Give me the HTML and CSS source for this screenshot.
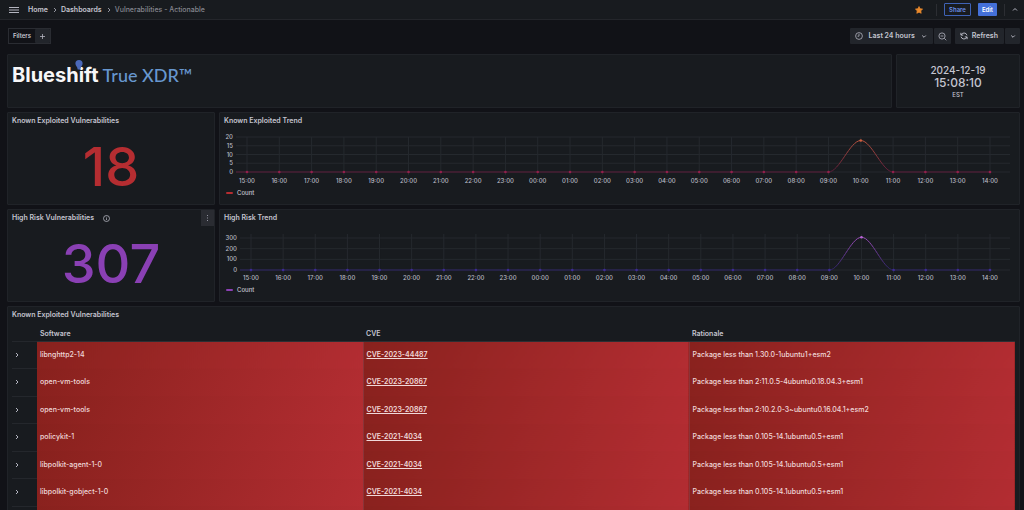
FILE: index.html
```html
<!DOCTYPE html>
<html lang="en">
<head>
<meta charset="utf-8">
<title>Vulnerabilities - Actionable</title>
<link rel="stylesheet" href="styles.css">
</head>
<body>
<header class="topbar">
  <button class="icon-btn menu-btn" aria-label="Open menu">
    <svg width="10" height="8" viewBox="0 0 10 8"><path d="M0 1.500h10M0 4h10M0 6.500h10" class="stroke"/></svg>
  </button>
  <nav class="crumbs" aria-label="Breadcrumb">
    <a href="#">Home</a>
    <svg width="4" height="6" viewBox="0 0 4 6"><path d="M1 1l2 2-2 2" class="stroke thin"/></svg>
    <a href="#">Dashboards</a>
    <svg width="4" height="6" viewBox="0 0 4 6"><path d="M1 1l2 2-2 2" class="stroke thin"/></svg>
    <span class="current">Vulnerabilities - Actionable</span>
  </nav>
  <div class="actions">
    <button class="icon-btn star" aria-label="Unmark as favorite">
      <svg width="8" height="8" viewBox="0 0 8 8"><path d="M4 .5l1.100 2.200 2.500.4-1.800 1.700.4 2.500L4 6.200l-2.200 1.100.4-2.500L.4 3.100l2.500-.4z" fill="#eb8a2c" stroke="#eb8a2c" stroke-width=".7" stroke-linejoin="round"/></svg>
    </button>
    <span class="divider"></span>
    <button class="btn btn-outline">Share</button>
    <button class="btn btn-primary">Edit</button>
    <span class="divider"></span>
    <button class="icon-btn" aria-label="Collapse toolbar">
      <svg width="6" height="5" viewBox="0 0 6 5"><path d="M1 3.500l2-2 2 2" class="stroke"/></svg>
    </button>
  </div>
</header>

<main class="dashboard">
  <div class="toolbar">
    <div class="group filters">
      <span class="filters-label">Filters</span>
      <button class="seg" aria-label="Add filter">
        <svg width="7" height="7" viewBox="0 0 7 7"><path d="M3.500 1v5M1 3.500h5" class="stroke thin"/></svg>
      </button>
    </div>
    <div class="controls">
      <div class="group">
        <button class="seg seg-time">
          <svg width="8" height="8" viewBox="0 0 8 8"><circle cx="4" cy="4" r="3.400" class="stroke thin"/><path d="M4 1.800v2.400H2.500" class="stroke thin"/></svg>
          Last 24 hours
          <svg width="6" height="5" viewBox="0 0 6 5"><path d="M1.200 1.500L3 3.300l1.800-1.800" class="stroke"/></svg>
        </button>
        <button class="seg" aria-label="Zoom out time range">
          <svg width="9" height="9" viewBox="0 0 9 9"><circle cx="4" cy="4" r="3.100" class="stroke thin"/><path d="M2.600 4h2.800M6.300 6.300l2 2" class="stroke thin"/></svg>
        </button>
      </div>
      <div class="group">
        <button class="seg seg-refresh">
          <svg width="8" height="8" viewBox="0 0 8 8"><path d="M1.100 3A3.100 3.100 0 0 1 7 3.300M.9 .8v2.300h2.300M6.900 5A3.100 3.100 0 0 1 1 4.700M7.100 7.200V4.900H4.800" class="stroke"/></svg>
          Refresh
        </button>
        <button class="seg" aria-label="Auto refresh interval">
          <svg width="6" height="5" viewBox="0 0 6 5"><path d="M1.200 1.500L3 3.300l1.800-1.800" class="stroke"/></svg>
        </button>
      </div>
    </div>
  </div>

  <div class="row row-banner">
    <section class="panel banner">
      <span class="brand">Blueshift<svg class="pin" width="8" height="10" viewBox="0 0 8 10"><path d="M4 0a3.600 3.600 0 0 1 3.600 3.600C7.600 6 5.600 6.600 5.300 9.400H2.700C2.400 6.600.4 6 .4 3.600A3.600 3.600 0 0 1 4 0z" fill="#4b68b8"/></svg></span>
      <span class="product">True XDR™</span>
    </section>
    <section class="panel clock">
      <div class="clock-date">2024-12-19</div>
      <time class="clock-time">15:08:10</time>
      <div class="clock-zone">EST</div>
    </section>
  </div>

  <div class="row row-stat">
    <section class="panel">
      <h2 class="title">Known Exploited Vulnerabilities</h2>
      <div class="stat stat-red">18</div>
    </section>
    <section class="panel">
      <h2 class="title">Known Exploited Trend</h2>
      <svg class="chart" id="exploited-trend" role="img" aria-label="Known Exploited Trend"></svg>
      <div class="legend"><span class="swatch swatch-red"></span>Count</div>
    </section>
  </div>

  <div class="row row-stat">
    <section class="panel">
      <h2 class="title">High Risk Vulnerabilities
        <svg width="7" height="7" viewBox="0 0 7 7"><circle cx="3.500" cy="3.500" r="3" class="stroke thin"/><path d="M3.500 3.200v1.900M3.500 1.800v.7" class="stroke thin"/></svg>
      </h2>
      <button class="panel-menu" aria-label="Panel menu">
        <svg width="3" height="8" viewBox="0 0 3 8"><path d="M1 1h1v1H1zM1 3.500h1v1H1zM1 6h1v1H1z" fill="#9293a0"/></svg>
      </button>
      <div class="stat stat-purple">307</div>
    </section>
    <section class="panel">
      <h2 class="title">High Risk Trend</h2>
      <svg class="chart" id="risk-trend" role="img" aria-label="High Risk Trend"></svg>
      <div class="legend"><span class="swatch swatch-purple"></span>Count</div>
    </section>
  </div>

  <section class="panel panel-table">
    <h2 class="title">Known Exploited Vulnerabilities</h2>
    <table class="vulns">
      <thead>
        <tr><th class="expand"></th><th>Software</th><th>CVE</th><th>Rationale</th></tr>
      </thead>
      <tbody id="vuln-rows"></tbody>
    </table>
  </section>
</main>
<script src="dashboard.js"></script>
</body>
</html>
```
FILE: styles.css
```css
* {
  box-sizing: border-box;
}

body {
  margin: 0;
  height: 100vh;
  overflow: hidden;
  display: flex;
  flex-direction: column;
  background: #111217;
  color: #c4c5d0;
  font: 500 7px/10px Inter, "Liberation Sans", sans-serif;
}

button {
  margin: 0;
  padding: 0;
  border: 0;
  background: none;
  color: inherit;
  font: inherit;
  display: flex;
  align-items: center;
  justify-content: center;
}

a {
  color: inherit;
  text-decoration: none;
}

svg {
  display: block;
  flex: none;
}

.stroke {
  fill: none;
  stroke: #b4b5c0;
  stroke-width: 1;
}

.thin {
  stroke-width: 0.8;
}

.topbar {
  flex: none;
  display: flex;
  align-items: center;
  height: 20px;
  padding: 0 6px 0 8px;
  background: #181b1f;
  border-bottom: 1px solid #24262b;
}

.menu-btn {
  width: 11px;
}

.crumbs {
  display: flex;
  align-items: center;
  gap: 4px;
  margin-left: 9px;
  font-weight: 600;
}

.crumbs svg {
  margin: 0 0 0 1px;
}

.current {
  color: #85868f;
  font-weight: 500;
}

.actions {
  display: flex;
  align-items: center;
  gap: 7px;
  margin-left: auto;
}

.star {
  margin-right: 6px;
}

.divider {
  width: 1px;
  height: 12px;
  background: #2c2e33;
}

.btn {
  height: 13px;
  padding: 0 4px;
  border-radius: 1px;
  font-size: 6px;
  font-weight: 600;
}

.btn-outline {
  border: 1px solid #3f62b5;
  color: #6a8fe8;
}

.btn-primary {
  background: #4470d8;
  color: #ffffff;
}

.dashboard {
  flex: 1;
  min-height: 0;
  overflow: hidden;
  display: flex;
  flex-direction: column;
  gap: 4px;
  padding: 8px 4px 0 7px;
}

.toolbar {
  flex: none;
  display: flex;
  justify-content: space-between;
  height: 22px;
}

.controls {
  display: flex;
  gap: 4px;
}

.group {
  display: flex;
  height: 16px;
  gap: 1px;
}

.seg {
  gap: 4px;
  min-width: 15px;
  padding: 0 4px;
  background: #22252b;
  border-radius: 1px;
  font-weight: 600;
}

.seg-time {
  gap: 6px;
  padding: 0 6px 0 5px;
}

.seg-refresh {
  padding: 0 6px 0 5px;
}

.filters {
  gap: 0;
  border: 1px solid #2a2c32;
  margin-left: 1px;
}

.filters-label {
  padding: 2px 4px;
  font-size: 6px;
  font-weight: 600;
}

.row {
  flex: none;
  display: grid;
  gap: 4px;
}

.row-banner {
  grid-template-columns: 885fr 124fr;
  min-height: 54px;
}

.row-stat {
  grid-template-columns: 208fr 801fr;
  min-height: 93px;
}

.panel {
  position: relative;
  min-width: 0;
  display: flex;
  flex-direction: column;
  background: #181b1f;
  border: 1px solid #202328;
  border-radius: 1px;
}

.title {
  display: flex;
  align-items: center;
  gap: 9px;
  height: 16px;
  margin: 0;
  padding: 0 4px;
  font-size: 7px;
  font-weight: 600;
}

.banner {
  flex-direction: row;
  align-items: baseline;
  gap: 4px;
  padding: 8px 4px;
}

.brand {
  position: relative;
  color: #f7f7f8;
  font-size: 20px;
  line-height: 24px;
  font-weight: 700;
}

.pin {
  position: absolute;
  top: -3px;
  right: 16px;
}

.product {
  color: #6797cf;
  font-family: Lato, sans-serif;
  font-size: 18px;
  line-height: 24px;
}

.clock {
  align-items: center;
  justify-content: center;
}

.clock-date {
  font-size: 10px;
  line-height: 12px;
}

.clock-time {
  font-size: 12px;
  line-height: 14px;
}

.clock-zone {
  font-size: 6px;
  line-height: 9px;
}

.stat {
  flex: 1;
  display: flex;
  align-items: center;
  justify-content: center;
  font-size: 54px;
  line-height: 60px;
  font-weight: 500;
}

.stat-red {
  color: #b52d31;
}

.stat-purple {
  color: #8a40b4;
}

.panel-menu {
  position: absolute;
  top: 0;
  right: 0;
  width: 13px;
  height: 16px;
  background: #2a2c32;
}

.chart {
  width: 100%;
  height: 58px;
}

.chart text {
  fill: #b9bac4;
  font-size: 6px;
}

.grid-line {
  stroke: #25292e;
  stroke-width: 1;
}

.series {
  fill: none;
  stroke-width: 1;
}

.legend {
  display: flex;
  align-items: center;
  gap: 4px;
  padding: 1px 6px;
  font-size: 6px;
}

.swatch {
  width: 7px;
  height: 2px;
  border-radius: 1px;
}

.swatch-red {
  background: #b52d31;
}

.swatch-purple {
  background: #8a40b4;
}

.panel-table {
  flex: none;
  padding: 0 4px;
}

.panel-table .title {
  padding: 0;
}

.vulns {
  width: 100%;
  height: 211px;
  table-layout: fixed;
  border-collapse: collapse;
}

.vulns th {
  height: 18px;
  padding: 4px 3px 0;
  text-align: left;
  font-weight: 600;
  border-bottom: 1px solid #2c2e33;
}

.vulns .expand {
  width: 25px;
  padding: 0 3px;
  background: none;
  border-bottom: 1px solid #24272c;
}

.vulns td {
  height: 27px;
  padding: 0 3px;
  color: #f0d9da;
  background: linear-gradient(120deg, #88211d, #b32d32);
}

.vulns td + td + td {
  border-left: 1px solid #8a3438;
}

.vulns td a {
  font-weight: 600;
  text-decoration: underline;
}
```
FILE: dashboard.js
```javascript
const SVG_NS = "http://www.w3.org/2000/svg";

function add(parent, tag, attrs, text) {
  const node = document.createElementNS(SVG_NS, tag);
  for (const key in attrs) node.setAttribute(key, attrs[key]);
  if (text !== undefined) node.textContent = text;
  parent.appendChild(node);
  return node;
}

// Hourly series from 15:00 to 14:00; only the 10:00 bucket has a value.
function drawChart(id, cfg) {
  const svg = document.getElementById(id);
  svg.replaceChildren();
  const width = svg.getBoundingClientRect().width;
  const right = width - 9;
  const step = (width - 29 - cfg.first) / 23;
  const y = v => cfg.base - (v / cfg.max) * (cfg.base - cfg.top);

  for (const tick of cfg.ticks) {
    add(svg, "line", { x1: cfg.left, x2: right, y1: y(tick), y2: y(tick), class: "grid-line" });
    add(svg, "text", { x: cfg.left - 3, y: y(tick) + 2, "text-anchor": "end" }, tick);
  }
  for (let i = 0; i < 24; i++) {
    const x = cfg.first + i * step;
    add(svg, "line", { x1: x, x2: x, y1: 8, y2: cfg.base + 3, class: "grid-line" });
    const hour = String((15 + i) % 24).padStart(2, "0");
    add(svg, "text", { x: x, y: 54, "text-anchor": "middle" }, hour + ":00");
  }

  const gradient = add(add(svg, "defs", {}), "linearGradient", {
    id: id + "-fade", gradientUnits: "userSpaceOnUse", x1: 0, x2: 0, y1: cfg.base, y2: y(cfg.peak)
  });
  add(gradient, "stop", { offset: 0, "stop-color": cfg.low });
  add(gradient, "stop", { offset: 1, "stop-color": cfg.high });

  const x9 = cfg.first + 18 * step, x10 = x9 + step, x11 = x10 + step, h = step / 3;
  const top = y(cfg.peak), base = cfg.base;
  add(svg, "path", {
    d: `M${cfg.left} ${base}H${x9}C${x9 + h} ${base} ${x10 - h} ${top} ${x10} ${top}` +
       `C${x10 + h} ${top} ${x11 - h} ${base} ${x11} ${base}H${cfg.first + 23 * step}`,
    class: "series", stroke: `url(#${id}-fade)`
  });
  for (let i = 0; i < 24; i++) {
    const isPeak = i === 19;
    add(svg, "circle", {
      cx: cfg.first + i * step, cy: isPeak ? top : base, r: 1.3,
      fill: isPeak ? cfg.peakDot : cfg.dot
    });
  }
}

function drawCharts() {
  drawChart("exploited-trend", {
    left: 16, first: 27, top: 8, base: 43, max: 20, peak: 18, ticks: [0, 5, 10, 15, 20],
    low: "#5a1a38", high: "#b5523f", dot: "#92204b", peakDot: "#d0603f"
  });
  drawChart("risk-trend", {
    left: 20, first: 31, top: 12, base: 44, max: 300, peak: 307, ticks: [0, 100, 200, 300],
    low: "#2c2364", high: "#9a4cb8", dot: "#3d2b96", peakDot: "#b964d4"
  });
}

const vulnerabilities = [
  ["libnghttp2-14", "CVE-2023-44487", "Package less than 1.30.0-1ubuntu1+esm2"],
  ["open-vm-tools", "CVE-2023-20867", "Package less than 2:11.0.5-4ubuntu0.18.04.3+esm1"],
  ["open-vm-tools", "CVE-2023-20867", "Package less than 2:10.2.0-3~ubuntu0.16.04.1+esm2"],
  ["policykit-1", "CVE-2021-4034", "Package less than 0.105-14.1ubuntu0.5+esm1"],
  ["libpolkit-agent-1-0", "CVE-2021-4034", "Package less than 0.105-14.1ubuntu0.5+esm1"],
  ["libpolkit-gobject-1-0", "CVE-2021-4034", "Package less than 0.105-14.1ubuntu0.5+esm1"],
  ["", "", ""]
];

document.getElementById("vuln-rows").innerHTML = vulnerabilities.map(([software, cve, why]) => `
  <tr>
    <td class="expand">${software ? `<button aria-label="Expand row"><svg width="4" height="6" viewBox="0 0 4 6"><path d="M1 1l2 2-2 2" class="stroke"/></svg></button>` : ""}</td>
    <td>${software}</td>
    <td>${cve ? `<a href="#">${cve}</a>` : ""}</td>
    <td>${why}</td>
  </tr>`).join("");

drawCharts();
window.addEventListener("resize", drawCharts);
```
